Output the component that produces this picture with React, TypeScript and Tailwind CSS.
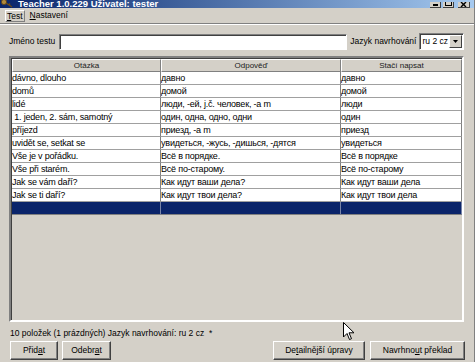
import React from "react";

const rows: string[][] = [
  ["dávno, dlouho", "давно", "давно"],
  ["domů", "домой", "домой"],
  ["lidé", "люди, -ей, j.č. человек, -а m", "люди"],
  [" 1. jeden, 2. sám, samotný", "один, одна, одно, одни", "один"],
  ["příjezd", "приезд, -а m", "приезд"],
  ["uvidět se, setkat se", "увидеться, -жусь, -дишься, -дятся", "увидеться"],
  ["Vše je v pořádku.", "Всё в порядке.", "Всё в порядке"],
  ["Vše při starém.", "Всё по-старому.", "Всё по-старому"],
  ["Jak se vám daří?", "Как идут ваши дела?", "Как идут ваши дела"],
  ["Jak se ti daří?", "Как идут твои дела?", "Как идут твои дела"],
];

const cols = ["w-[149px]", "w-[180px]", "w-[121px]"];

function WinButton({ label, u, className }: { label: string; u: number; className: string }) {
  return (
    <button
      className={
        "h-[19px] flex items-center justify-center bg-[#d4d0c8] border border-t-white border-l-white border-b-[#404040] border-r-[#404040] shadow-[inset_-1px_-1px_0_#808080] text-[8.5px] text-black " +
        className
      }
    >
      <span>
        {label.slice(0, u)}
        <span className="underline">{label[u]}</span>
        {label.slice(u + 1)}
      </span>
    </button>
  );
}

export default function App() {
  return (
    <div
      className="relative w-[475px] h-[362px] bg-[#d4d0c8] flex flex-col overflow-hidden border-r border-r-[#808080]"
      style={{ fontFamily: '"Liberation Sans", Arial, sans-serif' }}
    >
      {/* title bar, top cut off */}
      <div className="h-[8px] flex items-end bg-linear-to-r from-[#0a246a] to-[#a6caf0] overflow-hidden">
        <svg width="12" height="9" viewBox="0 0 12 9" className="ml-[1px]">
          <circle cx="3" cy="3" r="2.6" fill="#b08a3c" stroke="#5a3c10" strokeWidth="0.8" />
          <path d="M5 4 L11 8 M8 6 L9 4.5" stroke="#6a4a18" strokeWidth="1.4" />
        </svg>
        <span className="ml-[5px] text-[9.5px] leading-[10px] font-bold text-white -mb-[1px]">
          Teacher 1.0.229 Uživatel: tester
        </span>
        <div className="ml-auto flex items-end gap-[2px] mr-[4px]">
          <div className="w-[11px] h-[6px] bg-[#d4d0c8] border-r border-b border-[#404040] flex items-end justify-center pb-[1px]">
            <div className="w-[5px] h-[2px] bg-black" />
          </div>
          <div className="w-[11px] h-[6px] bg-[#d4d0c8] border-r border-b border-[#404040] flex items-end justify-center pb-[1px]">
            <div className="w-[7px] h-[4px] border border-black border-t-0" />
          </div>
          <div className="ml-[2px] w-[12px] h-[6px] bg-[#d4d0c8] border-r border-b border-[#404040] flex items-end justify-center">
            <svg width="7" height="5" viewBox="0 0 7 5">
              <path d="M1 0 L6 5 M6 0 L1 5" stroke="black" strokeWidth="1.4" />
            </svg>
          </div>
        </div>
      </div>

      {/* menu */}
      <div className="h-[15px] flex items-center text-[8.5px] text-black pl-[5px]">
        <span className="px-[1px] h-[12px] leading-[10px] border border-t-white border-l-white border-b-[#808080] border-r-[#808080]">
          <span className="underline">T</span>est
        </span>
        <span className="ml-[4px] px-[1px]">
          <span className="underline">N</span>astavení
        </span>
      </div>
      <div className="h-[1px] bg-[#808080]" />
      <div className="h-[1px] bg-white" />

      {/* name row */}
      <div className="mt-[8px] flex items-center text-[8.5px] text-black h-[17px]">
        <span className="ml-[9px]">Jméno testu</span>
        <div className="ml-[4px] w-[288px] h-[16px] bg-white border border-t-[#808080] border-l-[#808080] border-b-white border-r-white shadow-[inset_1px_1px_0_#404040]" />
        <span className="ml-[3px]">Jazyk navrhování</span>
        <div className="ml-[3px] w-[45px] h-[17px] bg-white border border-t-[#808080] border-l-[#808080] border-b-white border-r-white shadow-[inset_1px_1px_0_#404040] flex items-center pl-[2px]">
          <span className="flex-1">ru 2 cz</span>
          <div className="w-[13px] h-[13px] mr-[1px] bg-[#d4d0c8] border border-t-white border-l-white border-b-[#404040] border-r-[#404040] flex items-center justify-center">
            <svg width="5" height="3" viewBox="0 0 5 3">
              <path d="M0 0 H5 L2.5 3 Z" fill="black" />
            </svg>
          </div>
        </div>
      </div>

      {/* list */}
      <div className="mt-[6px] ml-[9px] w-[455px] h-[266px] bg-[#d4d0c8] border-2 border-t-[#808080] border-l-[#808080] border-b-white border-r-white shadow-[inset_1px_1px_0_#404040] pl-[1px] pt-[1px]">
        <div className="flex h-[13px] text-[8px] text-[#202020]">
          {["Otázka", "Odpověď", "Stačí napsat"].map((h, i) => (
            <div
              key={h}
              className={
                cols[i] +
                " flex items-center justify-center border-t border-l border-t-white border-l-white border-r border-b border-r-[#808080] border-b-[#808080]"
              }
            >
              {h}
            </div>
          ))}
        </div>
        {rows.map((r, ri) => (
          <div key={ri} className="flex h-[13px] bg-white text-black text-[9px] tracking-[-0.2px]">
            {r.map((c, ci) => (
              <div
                key={ci}
                className={cols[ci] + " border-r border-r-[#808080] border-b border-b-[#a0a0a0] leading-[12px] whitespace-pre overflow-hidden"}
              >
                {c}
              </div>
            ))}
          </div>
        ))}
        <div className="flex h-[13px] bg-[#0a246a]">
          {cols.map((w, i) => (
            <div key={i} className={w + " border-r border-r-[#7884a8] border-b border-b-[#808080]"} />
          ))}
        </div>
      </div>

      {/* status */}
      <div className="mt-[5px] ml-[10px] h-[12px] text-[8.5px] leading-[12px] text-black whitespace-pre">
        10 položek (1 prázdných) Jazyk navrhování: ru 2 cz  *
      </div>

      {/* buttons */}
      <div className="mt-[2px] flex">
        <WinButton label="Přidat" u={4} className="ml-[10px] w-[48px]" />
        <WinButton label="Odebrat" u={5} className="ml-[4px] w-[49px]" />
        <WinButton label="Detailnější úpravy" u={2} className="ml-auto w-[92px]" />
        <WinButton label="Navrhnout překlad" u={7} className="ml-[5px] mr-[9px] w-[95px]" />
      </div>

      {/* mouse cursor */}
      <svg className="absolute left-[343px] top-[322px]" width="12" height="19" viewBox="0 0 12 19">
        <path d="M0.5 0.5 V15 L4 11.5 L6.5 17.5 L8.5 16.7 L6 10.8 H11 Z" fill="white" stroke="black" strokeWidth="1" />
      </svg>
    </div>
  );
}
